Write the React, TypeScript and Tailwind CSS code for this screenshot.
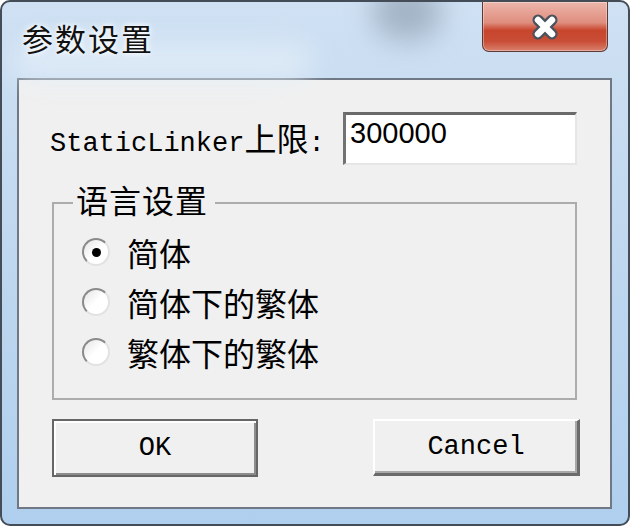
import React from 'react';

const mono = "font-['Liberation_Mono','Noto_Sans_CJK_SC',monospace]";
const cjk = "font-['Noto_Sans_CJK_SC','Noto_Sans',sans-serif]";

const Radio = ({ checked, label }: { checked?: boolean; label: string }) => (
  <div className="flex h-[50px] items-center">
    <span className="flex h-[28px] w-[28px] items-center justify-center rounded-full border-2 border-t-[#8a8a8a] border-l-[#8a8a8a] border-r-[#e2e2e2] border-b-[#e2e2e2] bg-gradient-to-br from-[#e4e4e4] via-white to-white">
      {checked && <span className="h-[9px] w-[9px] rounded-full bg-black" />}
    </span>
    <span className={`ml-[17px] text-[32px] leading-[40px] text-black ${cjk}`}>{label}</span>
  </div>
);

export default function App() {
  return (
    <div className="h-[526px] w-[630px] bg-white">
      <div className="relative flex h-full w-full flex-col overflow-hidden rounded-[10px] border-2 border-[#434c57] bg-gradient-to-b from-[#cfe1f3] via-[#bfd7ef] to-[#afcfee]">
        {/* blurred glass behind the title bar */}
        <div className="pointer-events-none absolute left-[370px] top-[-18px] h-[56px] w-[70px] rounded-full bg-[#7f8fa0] opacity-55 blur-[14px]" />
        <div className="pointer-events-none absolute left-[10px] top-[40px] h-[40px] w-[300px] rounded-full bg-[#e4eef8] opacity-70 blur-[12px]" />

        <div className="relative flex h-[76px] justify-between pl-[20px] pr-[20px]">
          <div className={`pt-[20px] text-[31px] leading-[32px] tracking-[2px] text-[#111] [text-shadow:0_0_8px_#fff,0_0_4px_#fff] ${cjk}`}>
            参数设置
          </div>
          <div className="flex h-[50px] w-[126px] items-center justify-center rounded-b-[7px] border border-t-0 border-[#5b3a35] bg-[linear-gradient(#ecb6ab,#df8e7e_42%,#c8452d_58%,#c94d36_80%,#d9806c)] shadow-[inset_0_0_0_1px_rgba(255,255,255,0.35)]">
            <svg width="34" height="30" viewBox="0 0 34 30">
              <path d="M10 8 L24 22 M24 8 L10 22" stroke="#4a525c" strokeWidth="11" strokeLinecap="round" fill="none" />
              <path d="M10 8 L24 22 M24 8 L10 22" stroke="#ffffff" strokeWidth="6.5" strokeLinecap="round" fill="none" />
            </svg>
          </div>
        </div>

        <div className="mb-[15px] ml-[15px] mr-[16px] flex flex-1 flex-col border-2 border-[#6f7884] bg-[#f0f0f0] pl-[31px] pr-[30px] pt-[32px]">
          <div className="flex items-center justify-between">
            <div className="flex items-baseline text-black">
              <span className={`text-[27px] ${mono}`}>StaticLinker</span>
              <span className={`text-[32px] ${cjk}`}>上限</span>
              <span className={`text-[27px] ${mono}`}>:</span>
            </div>
            <div className="mr-[3px] flex h-[53px] w-[234px] items-start border-b-2 border-l-[3px] border-r-2 border-t-[3px] border-b-[#e6e6e6] border-l-[#727272] border-r-[#e6e6e6] border-t-[#6a6a6a] bg-white pl-[4px] pt-[2px]">
              <span className="font-['Liberation_Sans',Arial,sans-serif] text-[29px] leading-[32px] text-black">300000</span>
            </div>
          </div>

          <fieldset className="ml-[2px] mr-[3px] mt-[22px] border-2 border-[#acacac]">
            <legend className={`ml-[19px] pl-[3px] pr-[7px] text-[32px] leading-[32px] tracking-[1px] text-black ${cjk}`}>
              <span className="relative -top-[4px]">语言设置</span>
            </legend>
            <div className="pb-[21px] pl-[28px] pt-[8px]">
              <Radio checked label="简体" />
              <Radio label="简体下的繁体" />
              <Radio label="繁体下的繁体" />
            </div>
          </fieldset>

          <div className="ml-[2px] mt-[19px] flex justify-between">
            <button className={`flex h-[58px] w-[206px] items-center justify-center border-2 border-[#666] bg-[#f0f0f0] text-[27px] text-black shadow-[inset_2px_2px_0_#fff,inset_-2px_-2px_0_#8c8c8c] ${mono}`}>
              OK
            </button>
            <button className={`flex h-[57px] w-[207px] items-center justify-center border-b-[3px] border-l-2 border-r-[3px] border-t-2 border-b-[#6a6a6a] border-l-white border-r-[#6a6a6a] border-t-white bg-[#f0f0f0] text-[27px] text-black shadow-[inset_-2px_-2px_0_#a8a8a8] ${mono}`}>
              Cancel
            </button>
          </div>
        </div>
      </div>
    </div>
  );
}
